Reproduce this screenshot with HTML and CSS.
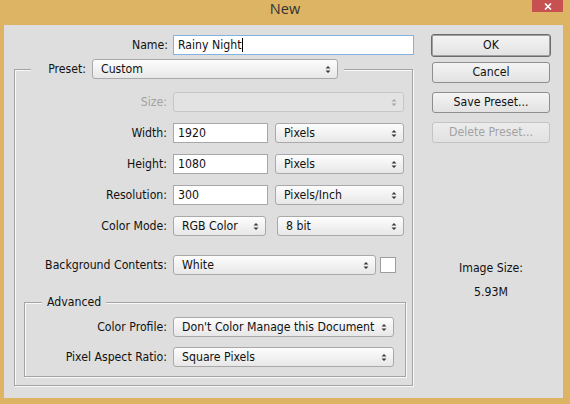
FILE: index.html
```html
<!DOCTYPE html>
<html>
<head>
<meta charset="utf-8">
<title>New</title>
<link rel="stylesheet" href="styles.css">
</head>
<body>
<div class="window">
  <div class="titlebar">
    <span class="title">New</span>
    <span class="close"><svg width="8" height="7" viewBox="0 0 8 7"><path d="M1 0.5L7 6.5M7 0.5L1 6.5" stroke="#fff" stroke-width="1.6"/></svg></span>
  </div>
  <div class="client">
    <div class="left">
      <div class="name-row">
        <span class="lbl name-lbl">Name:</span>
        <div class="field name-field">Rainy Night<span class="caret"></span></div>
      </div>
      <fieldset class="group outer">
        <legend class="outer-legend">
          <span class="lbl preset-lbl">Preset:</span>
          <div class="sel preset-sel"><span>Custom</span><svg width="6" height="9" viewBox="0 0 6 9"><path d="M0.5 3.5L3 1L5.5 3.5Z M0.5 5.5L3 8L5.5 5.5Z" fill="#3a3a3a"/></svg></div>
        </legend>
        <div class="rows">
          <div class="row">
            <span class="lbl dis">Size:</span>
            <div class="sel dis full-sel"><span></span><svg width="6" height="9" viewBox="0 0 6 9"><path d="M0.5 3.5L3 1L5.5 3.5Z M0.5 5.5L3 8L5.5 5.5Z" fill="#a8a8a8"/></svg></div>
          </div>
          <div class="row">
            <span class="lbl">Width:</span>
            <div class="field num">1920</div>
            <div class="sel unit"><span>Pixels</span><svg width="6" height="9" viewBox="0 0 6 9"><path d="M0.5 3.5L3 1L5.5 3.5Z M0.5 5.5L3 8L5.5 5.5Z" fill="#3a3a3a"/></svg></div>
          </div>
          <div class="row">
            <span class="lbl">Height:</span>
            <div class="field num">1080</div>
            <div class="sel unit"><span>Pixels</span><svg width="6" height="9" viewBox="0 0 6 9"><path d="M0.5 3.5L3 1L5.5 3.5Z M0.5 5.5L3 8L5.5 5.5Z" fill="#3a3a3a"/></svg></div>
          </div>
          <div class="row">
            <span class="lbl">Resolution:</span>
            <div class="field num">300</div>
            <div class="sel unit"><span>Pixels/Inch</span><svg width="6" height="9" viewBox="0 0 6 9"><path d="M0.5 3.5L3 1L5.5 3.5Z M0.5 5.5L3 8L5.5 5.5Z" fill="#3a3a3a"/></svg></div>
          </div>
          <div class="row">
            <span class="lbl">Color Mode:</span>
            <div class="sel mode-sel"><span>RGB Color</span><svg width="6" height="9" viewBox="0 0 6 9"><path d="M0.5 3.5L3 1L5.5 3.5Z M0.5 5.5L3 8L5.5 5.5Z" fill="#3a3a3a"/></svg></div>
            <div class="sel bit-sel"><span>8 bit</span><svg width="6" height="9" viewBox="0 0 6 9"><path d="M0.5 3.5L3 1L5.5 3.5Z M0.5 5.5L3 8L5.5 5.5Z" fill="#3a3a3a"/></svg></div>
          </div>
          <div class="row bg-row">
            <span class="lbl">Background Contents:</span>
            <div class="sel bg-sel"><span>White</span><svg width="6" height="9" viewBox="0 0 6 9"><path d="M0.5 3.5L3 1L5.5 3.5Z M0.5 5.5L3 8L5.5 5.5Z" fill="#3a3a3a"/></svg></div>
            <div class="swatch"></div>
          </div>
        </div>
        <fieldset class="group adv">
          <legend class="adv-legend">Advanced</legend>
          <div class="rows adv-rows">
            <div class="row">
              <span class="lbl">Color Profile:</span>
              <div class="sel wide-sel"><span>Don't Color Manage this Document</span><svg width="6" height="9" viewBox="0 0 6 9"><path d="M0.5 3.5L3 1L5.5 3.5Z M0.5 5.5L3 8L5.5 5.5Z" fill="#3a3a3a"/></svg></div>
            </div>
            <div class="row">
              <span class="lbl">Pixel Aspect Ratio:</span>
              <div class="sel wide-sel"><span>Square Pixels</span><svg width="6" height="9" viewBox="0 0 6 9"><path d="M0.5 3.5L3 1L5.5 3.5Z M0.5 5.5L3 8L5.5 5.5Z" fill="#3a3a3a"/></svg></div>
            </div>
          </div>
        </fieldset>
      </fieldset>
    </div>
    <div class="right">
      <div class="btn btn-ok">OK</div>
      <div class="btn btn-cancel">Cancel</div>
      <div class="btn">Save Preset...</div>
      <div class="btn btn-dis">Delete Preset...</div>
      <div class="info">
        <div>Image Size:</div>
        <div>5.93M</div>
      </div>
    </div>
  </div>
</div>
</body>
</html>
```
FILE: styles.css
```css
* { box-sizing: border-box; }
html, body { margin: 0; padding: 0; }
body {
  font-family: "DejaVu Sans Condensed", "DejaVu Sans", "Open Sans", sans-serif;
  font-stretch: condensed;
  font-size: 12.2px;
  color: #111;
  background: #dcb464;
}
.window {
  width: 570px;
  height: 404px;
  background: #dcb464;
  display: flex;
  flex-direction: column;
}
.titlebar {
  height: 25px;
  flex: none;
  display: grid;
  grid-template-columns: 1fr auto 1fr;
}
.title {
  grid-column: 2;
  font-family: "Open Sans", "Noto Sans", sans-serif;
  font-stretch: normal;
  font-size: 14.5px;
  line-height: 17px;
  color: #333;
}
.close {
  grid-column: 3;
  justify-self: end;
  align-self: start;
  width: 31px;
  height: 12px;
  margin-right: 7px;
  background: #c75050;
  display: flex;
  align-items: center;
  justify-content: center;
}
.client {
  flex: 1;
  margin: 0 7px 6px 4px;
  background: #dedede;
  display: grid;
  grid-template-columns: 400px 118px;
  column-gap: 18px;
  padding: 0 13px 0 10px;
  align-items: start;
}
.lbl { white-space: nowrap; line-height: 16px; }
.lbl.dis { color: #a3a3a3; }
.left { padding-top: 10px; }
.name-row {
  display: flex;
  align-items: center;
  gap: 5px;
  height: 20px;
}
.name-lbl { width: 154px; text-align: right; }
.field {
  height: 20px;
  background: #fff;
  border: 1px solid #a7a7a7;
  padding: 0 4px;
  line-height: 18px;
  white-space: nowrap;
  flex: none;
}
.name-field { width: 241px; border-color: #84b2e0; }
.caret {
  display: inline-block;
  width: 1px;
  height: 14px;
  background: #000;
  vertical-align: -3px;
}
.group {
  margin: 0;
  padding: 0;
  min-width: 0;
  border: 1px solid #a4a4a4;
  box-shadow: inset 1px 1px 0 #f8f8f8, 1px 1px 0 #f8f8f8;
}
.outer {
  margin-top: 4px;
  width: 399px;
}
.outer-legend {
  margin-left: 16px;
  padding: 0 6px 0 0;
  background: #dedede;
  display: flex;
  align-items: center;
  gap: 6px;
}
.preset-lbl { width: 55px; text-align: right; }
.preset-sel { width: 246px; }
.rows {
  display: flex;
  flex-direction: column;
  gap: 11px;
  margin-top: 13px;
}
.row {
  display: flex;
  align-items: center;
  height: 20px;
}
.row > .lbl {
  width: 152px;
  margin-right: 6px;
  text-align: right;
  flex: none;
}
.bg-row { margin-top: 8px; }
.sel {
  height: 20px;
  flex: none;
  border: 1px solid #a9a9a9;
  border-radius: 3px;
  background: linear-gradient(#fdfdfd, #e7e7e7);
  display: flex;
  align-items: center;
  padding: 0 6px 0 8px;
  white-space: nowrap;
  line-height: 18px;
}
.sel > span { flex: 1; overflow: hidden; }
.sel > svg { flex: none; }
.sel.dis {
  background: #e3e3e3;
  border-color: #c6c6c6;
}
.full-sel { width: 231px; }
.num { width: 95px; }
.unit { width: 129px; margin-left: 7px; }
.mode-sel { width: 93px; }
.bit-sel { width: 127px; margin-left: 11px; }
.bg-sel { width: 203px; }
.swatch {
  width: 16px;
  height: 16px;
  margin-left: 4px;
  background: #fff;
  border: 1px solid #9d9d9d;
  flex: none;
}
.adv {
  margin: 19px 6px 8px 9px;
  padding: 0 0 9px 0;
}
.adv-legend {
  margin-left: 17px;
  padding: 0 5px;
  line-height: 16px;
  background: #dedede;
}
.adv-rows { margin-top: 7px; gap: 10px; }
.adv-rows .row > .lbl { width: 142px; }
.wide-sel { width: 221px; }
.right {
  padding-top: 9px;
  display: flex;
  flex-direction: column;
}
.btn {
  height: 21px;
  border: 1px solid #8e8e8e;
  border-radius: 3px;
  background: linear-gradient(#f4f4f4, #e2e2e2);
  text-align: center;
  line-height: 19px;
  margin-top: 9px;
}
.btn-ok {
  height: 23px;
  margin: 0 -1px;
  border-color: #6c6c6c;
  box-shadow: inset 0 0 0 1px #a0a0a0;
  line-height: 21px;
}
.btn-cancel { margin-top: 5px; }
.btn-dis {
  color: #a3a3a3;
  border-color: #c4c4c4;
  background: linear-gradient(#ececec, #e2e2e2);
}
.info {
  margin-top: 113px;
  text-align: center;
  line-height: 24px;
}
```
